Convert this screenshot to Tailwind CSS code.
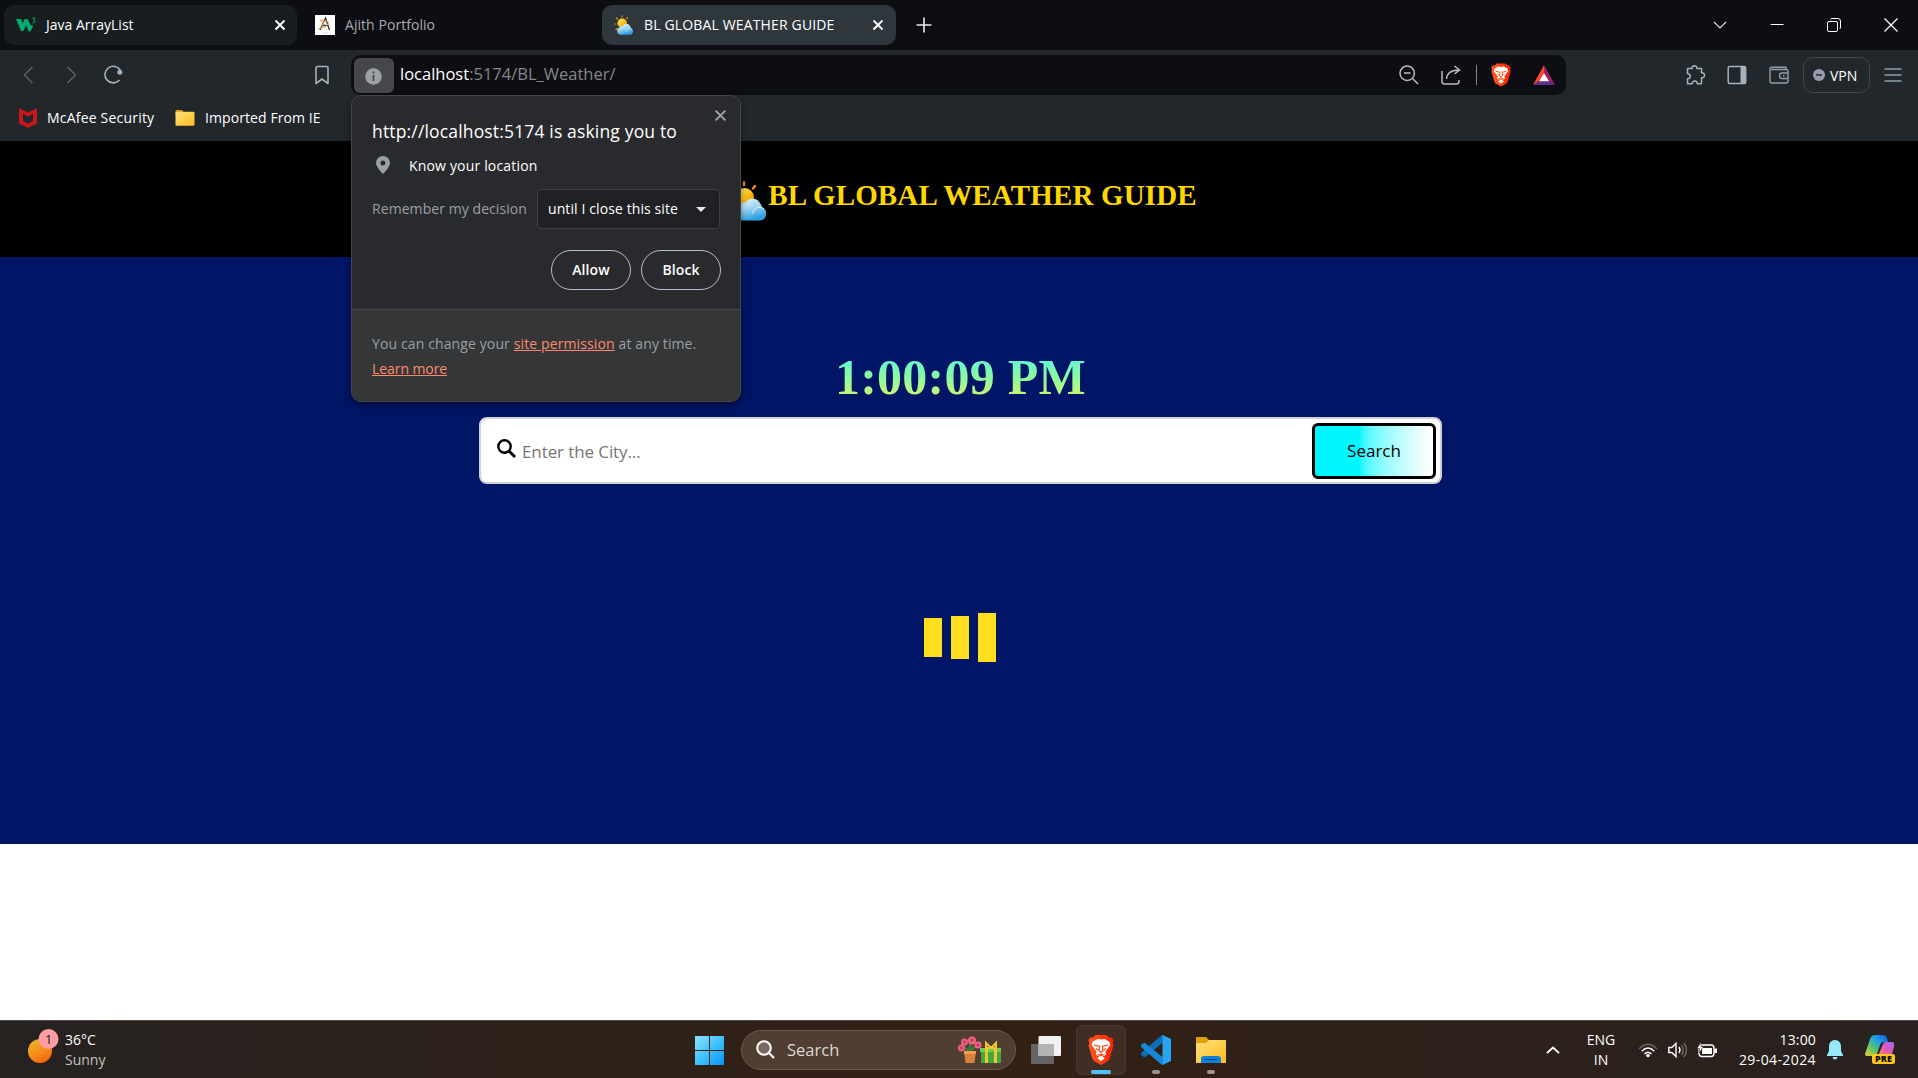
<!DOCTYPE html>
<html lang="en">
<head>
<meta charset="utf-8">
<title>BL GLOBAL WEATHER GUIDE</title>
<script src="https://cdn.jsdelivr.net/npm/@tailwindcss/browser@4"></script>
</head>
<body class="w-[1918px] h-[1078px] overflow-hidden bg-white font-['Open_Sans','Noto_Sans',sans-serif] text-[14px] text-white flex flex-col relative">
<!-- Shared gradients and symbols -->
<svg class="absolute w-0 h-0">
  <defs>
    <linearGradient id="sun" x1="0" y1="0" x2="1" y2="1"><stop offset="0" stop-color="#fff27a"/><stop offset=".5" stop-color="#fcc21b"/><stop offset="1" stop-color="#f57c00"/></linearGradient>
    <linearGradient id="sunny" x1=".2" y1="0" x2=".7" y2="1"><stop offset="0" stop-color="#ecb52c"/><stop offset=".5" stop-color="#f7901c"/><stop offset="1" stop-color="#f2640a"/></linearGradient>
    <linearGradient id="cloud" x1="0" y1="0" x2=".4" y2="1"><stop offset="0" stop-color="#e8f8ff"/><stop offset=".5" stop-color="#a5daf3"/><stop offset="1" stop-color="#2f9fe0"/></linearGradient>
    <linearGradient id="lion" x1="0" y1="0" x2="1" y2="0"><stop offset="0" stop-color="#ff5a1f"/><stop offset="1" stop-color="#ff2000"/></linearGradient>
    <linearGradient id="win" x1="0" y1="0" x2="1" y2="1"><stop offset="0" stop-color="#8fe3ff"/><stop offset=".5" stop-color="#3ec3ff"/><stop offset="1" stop-color="#0a90f5"/></linearGradient>
    <linearGradient id="fold" x1="0" y1="0" x2="1" y2="1"><stop offset="0" stop-color="#ffe07a"/><stop offset="1" stop-color="#fbbd20"/></linearGradient>
    <linearGradient id="cop1" x1="0" y1="1" x2="1" y2="0"><stop offset="0" stop-color="#f5d02a"/><stop offset=".35" stop-color="#58c66a"/><stop offset=".65" stop-color="#1f9fe8"/><stop offset="1" stop-color="#1552d8"/></linearGradient>
    <linearGradient id="cop2" x1="0" y1="1" x2="1" y2="0"><stop offset="0" stop-color="#ff8a4c"/><stop offset=".5" stop-color="#e056b8"/><stop offset="1" stop-color="#9a6cf5"/></linearGradient>
    <symbol id="weather" viewBox="0 0 40 40">
      <g stroke="#f08a1c" stroke-width="2.400" stroke-linecap="round"><path d="M16 1.500v2.500M27 5l-2 2.600M5 6l2.400 2.400M1.500 18h2.500M4 29l2-2"/></g>
      <circle cx="16.500" cy="16.500" r="9.500" fill="url(#sun)"/>
      <path d="M12.500 39.500a7.500 7.500 0 0 1-1-14.500 5.500 5.500 0 0 1 6-3.500 8.500 8.500 0 0 1 15 1.500 6 6 0 0 1 1.500 3.500 6.800 6.800 0 0 1-1.500 13z" fill="url(#cloud)"/>
      <path d="M25 33a6.500 6.500 0 0 1 11-5" fill="none" stroke="#e3f6ff" stroke-width="1.300" opacity=".7"/>
    </symbol>
    <symbol id="brave" viewBox="0 0 26 30">
      <path d="M7.500 0h11l2.600 2.700 2.300-.4 2.200 3-.9 2.700.8 2.500-3.800 13q-.5 1.800-2 2.800L13 30l-6.700-3.700q-1.500-1-2-2.800L.5 10.500 1.300 8 .4 5.300l2.200-3 2.300.4z" fill="url(#lion)"/>
      <path fill="#fff" d="M13 4.600 9.500 4 4.800 6.500 3.600 10l5 6.500-.6 3.200 3.500 1.800L9.300 23.300 13 26.300l3.700-3-2.200-1.800 3.500-1.800-.6-3.200 5-6.500-1.200-3.500L16.500 4z"/>
      <path d="M6 10l4.800 1.200M20 10l-4.800 1.200M11.700 10.500l-.7 5.500 2 1.300 2-1.300-.7-5.500M8.200 13.500l2 1.500M17.800 13.500l-2 1.500M13 17v3.600l-3.500-1.200M13 20.600l3.500-1.200" fill="none" stroke="#ff4310" stroke-width="1.200"/>
    </symbol>
    <symbol id="x" viewBox="0 0 12 12"><path d="M1.500 1.500l9 9M10.500 1.500l-9 9" stroke="currentColor" stroke-width="1.900" fill="none"/></symbol>
  </defs>
</svg>

<!-- Tab strip -->
<div class="h-[50px] bg-[#0d0e13] flex items-center pl-1 shrink-0">
  <div class="w-[293px] h-10 rounded-[10px] bg-[#181d20] flex items-center pl-3">
    <svg class="w-5 h-4 text-[#04aa6d]" viewBox="0 0 20 16"><path d="M0 2h5l1.800 4.500L8.500 2h3l3.700 7 .8-1.500 1 2-2.700 5h-1.500L10 8.500 7.500 14H5z" fill="currentColor"/><path d="M16.500 1h2.500l-1.500 2q1.800.2 1.500 1.700t-2.700 1" stroke="currentColor" fill="none"/></svg>
    <span class="ml-[10px] pb-[2px] w-[229px] whitespace-nowrap">Java ArrayList</span>
    <svg class="w-3 h-3 -ml-[1px]"><use href="#x"/></svg>
  </div>
  <div class="w-[305px] flex items-center pl-[18px] text-[#a9abaf]">
    <svg class="w-5 h-5" viewBox="0 0 20 20"><path d="M0 0h20v20H0z" fill="#fff"/><path d="M5 15l5.500-12 4 12M6.500 10.500h7" stroke="#333" stroke-width="1.300" fill="none"/><path d="M3 14q4 0 5-5t-2-4 3 1 4 3-6 4" stroke="#e0a24a" fill="none"/><path d="M7 18h6" stroke="#ccc" stroke-width=".7"/></svg>
    <span class="ml-[10px] pb-[2px] tracking-[.05px] whitespace-nowrap">Ajith Portfolio</span>
  </div>
  <div class="w-[294px] h-10 rounded-[10px] bg-[#2f373d] flex items-center pl-3">
    <svg class="w-5 h-5"><use href="#weather"/></svg>
    <span class="ml-[10px] pb-[2px] w-[228px] tracking-[.15px] whitespace-nowrap">BL GLOBAL WEATHER GUIDE</span>
    <svg class="w-3 h-3"><use href="#x"/></svg>
  </div>
  <svg class="w-4 h-4 ml-5" viewBox="0 0 16 16"><path d="M8 .5v15M.5 8h15" stroke="#eee" stroke-width="1.600"/></svg>
  <div class="ml-auto flex items-center gap-[43px] pr-5">
    <svg class="w-[14px] h-[14px]" viewBox="0 0 14 14"><path d="M1 4l6 6 6-6" stroke="#ddd" stroke-width="1.200" fill="none"/></svg>
    <svg class="w-[14px] h-[14px]" viewBox="0 0 14 14"><path d="M.5 6.500h13" stroke="#fff"/></svg>
    <svg class="w-[14px] h-[14px]" viewBox="0 0 14 14"><path d="M3.500 1.500Q4 .5 5 .5h6q2.500 0 2.500 2.500v6q0 1.500-1 2" stroke="#fff" fill="none"/><rect x=".5" y="3.500" width="10" height="10" rx="1.500" stroke="#fff" fill="none"/></svg>
    <svg class="w-[14px] h-[14px]" viewBox="0 0 14 14"><path d="M.5.5l13 13M13.500.5l-13 13" stroke="#fff" stroke-width="1.200"/></svg>
  </div>
</div>

<!-- Toolbar -->
<div class="h-[50px] bg-[#22272b] flex items-center pl-[23px] shrink-0">
  <svg class="w-3 h-5" viewBox="0 0 12 20"><path d="M9.500 2L1.500 10l8 8" stroke="#5b6266" stroke-width="1.500" fill="none"/></svg>
  <svg class="w-3 h-5 ml-[30px]" viewBox="0 0 12 20"><path d="M2.500 2l8 8-8 8" stroke="#5b6266" stroke-width="1.500" fill="none"/></svg>
  <svg class="w-5 h-5 ml-[26px]" viewBox="0 0 20 20"><path d="M17.500 5.500A8.300 8.300 0 1 0 16.500 15" stroke="#a3b2bb" stroke-width="1.600" fill="none"/><circle cx="16.800" cy="7.200" r="2.500" fill="#a3b2bb"/></svg>
  <svg class="w-4 h-5 ml-[191px]" viewBox="0 0 16 20"><path d="M2 18.500V3q0-1.500 1.500-1.500h9Q14 1.500 14 3v15.500l-6-4.500z" stroke="#a3b2bb" stroke-width="1.600" fill="none" stroke-linejoin="round"/></svg>
  <div class="ml-[21px] w-[1215px] h-10 rounded-[10px] bg-[#0d0e13] flex items-center pl-[3px] text-[16.500px]">
    <span class="w-10 h-[35px] rounded-md bg-[#46474b] flex items-center justify-center"><svg class="w-[17px] h-[17px] mt-[2px] mr-px" viewBox="0 0 17 17"><circle cx="8.500" cy="8.500" r="8.300" fill="#9aa0a6"/><path d="M8.500 3.500v2M8.500 7v6" stroke="#46474b" stroke-width="1.800"/></svg></span>
    <span class="ml-[6px] pb-px whitespace-nowrap">localhost</span><span class="pb-px text-[#85878b] whitespace-nowrap">:5174/BL_Weather/</span>
    <div class="ml-auto flex items-center pr-[11px]">
      <svg class="w-5 h-5 mr-[22px]" viewBox="0 0 20 20"><path d="M13.800 13.800L19 19M5 8h6.500" stroke="#b9babd" stroke-width="1.500"/><circle cx="8.200" cy="8.200" r="7.200" stroke="#b9babd" stroke-width="1.500" fill="none"/></svg>
      <svg class="w-5 h-5 mr-[15px]" viewBox="0 0 20 20"><path d="M1 6v10.500q0 2.500 2.500 2.500h12q2.500 0 2.500-2.500V15M5.500 14q.500-8.500 12-9M13.500 1l5 4-5 4" stroke="#b9babd" stroke-width="1.500" fill="none"/></svg>
      <span class="w-px h-5 bg-[#85878b] mr-[14px]"></span>
      <svg class="w-5 h-6 mr-[22px]"><use href="#brave"/></svg>
      <svg class="w-[22px] h-5" viewBox="0 0 22 20"><path d="M11 0v9l-5 7L0 20z" fill="#ff4724"/><path d="M11 0l11 20-6.500-4L11 9z" fill="#9e1f63"/><path d="M0 20l6.500-4h9l6.500 4z" fill="#662d91"/><path d="M11 8.300l5 8H6z" fill="#fff"/></svg>
    </div>
  </div>
  <div class="ml-auto flex items-center pr-4">
    <svg class="w-5 h-5 mr-[21px]" viewBox="0 0 20 20"><path d="M1.500 3.500h4.700q-.5-2.500 2.300-2.800Q11.300 1 10.800 3.500h4.700v4.300q3-.2 3 2.500t-3 2.500v6h-4.200q0-2.800-2.500-2.800t-2.600 2.800H1.500v-5q2.800 0 2.800-2.300T1.500 8.500z" stroke="#a3b2bb" stroke-width="1.500" fill="none" stroke-linejoin="round"/></svg>
    <svg class="w-5 h-5 mr-[22px]" viewBox="0 0 20 20"><rect x="1.200" y="1.500" width="17.500" height="17" rx="1.500" stroke="#a3b2bb" stroke-width="1.500" fill="none"/><path d="M13.500 1.500h5v17h-5z" fill="#a3b2bb"/></svg>
    <svg class="w-5 h-5 mr-[14px]" viewBox="0 0 20 20"><path d="M17 4.500V2.200H3Q1 2.200 1 3.500V16q0 2 2 2h14q2 0 2-2V6.500q0-2-2-2H2M19 8h-6q-2.500 0-2.500 2.800T13 13.500h6M14 10.800h1.500" stroke="#8fa0a8" stroke-width="1.400" fill="none"/></svg>
    <span class="w-[67px] h-[36px] rounded-[10px] border border-[#3d474c] flex items-center pl-[9px]"><svg class="w-3 h-3" viewBox="0 0 12 12"><circle cx="6" cy="6" r="6" fill="#9a9ab0"/><path d="M3 6h6" stroke="#22272b" stroke-width="1.500"/></svg><span class="ml-[5px] whitespace-nowrap">VPN</span></span>
    <svg class="w-[18px] h-4 ml-[14px]" viewBox="0 0 18 16"><path d="M.5 2h17M.5 8h17M.5 14h17" stroke="#8fa0a8" stroke-width="1.500"/></svg>
  </div>
</div>

<!-- Bookmarks bar -->
<div class="h-[41px] bg-[#22272b] flex items-center pl-[19px] pb-[6px] shrink-0">
  <svg class="w-[18px] h-5" viewBox="0 0 18 20"><path d="M0 0l9 4.500L18 0v15.500L9 20l-9-4.500zM4 6v7l5 2.500 5-2.500V6L9 8.500z" fill="#c8161d" fill-rule="evenodd"/></svg>
  <span class="ml-[10px] w-[128px] tracking-[.2px] whitespace-nowrap">McAfee Security</span>
  <svg class="w-5 h-4" viewBox="0 0 20 16"><path d="M1 0h6l2 2.500V5H.5V1z" fill="#d99a0b"/><rect x=".5" y="1.800" width="19" height="14" rx="1.200" fill="url(#fold)"/></svg>
  <span class="ml-[10px] tracking-[.09px] whitespace-nowrap">Imported From IE</span>
</div>

<!-- Page header -->
<header class="h-[116px] bg-black flex justify-center items-start pt-[38px] shrink-0 font-['Liberation_Serif',serif] font-bold">
  <svg class="w-10 h-10 ml-[7px] mt-[2px]"><use href="#weather"/></svg>
  <h1 class="text-[29px] leading-[33px] tracking-[.15px] text-[#ffd700] whitespace-nowrap">BL GLOBAL WEATHER GUIDE</h1>
</header>

<!-- Page body -->
<main class="h-[587px] bg-[#001565] flex flex-col items-center shrink-0">
  <div class="mt-[91px] h-[58px] leading-[58px] text-[50px] tracking-[.25px] font-bold font-['Liberation_Serif',serif] pl-[3px] bg-linear-to-b from-[#3df5f0] from-0% via-[#8cf8a0] via-50% to-[#dcf848] to-100% bg-clip-text text-transparent whitespace-nowrap">1:00:09 PM</div>
  <div class="mt-[11px] w-[963px] h-[67px] rounded-lg border-2 border-[#d2d2d6] bg-white flex items-center pl-4 pr-1 mr-[-3px] text-[17px]">
    <svg class="w-[19px] h-[19px] -mt-[5px]" viewBox="0 0 19 19"><circle cx="7.500" cy="7.500" r="6.200" stroke="#000" stroke-width="2.400" fill="none"/><path d="M12 12l6 6" stroke="#000" stroke-width="2.800"/></svg>
    <span class="ml-[6px] pt-[2px] tracking-[-.1px] text-[#757575] whitespace-nowrap">Enter the City...</span>
    <button class="ml-auto w-[124px] h-[56px] rounded-md border-[3px] border-black bg-linear-to-r from-[#00f7ff] from-38% to-white to-98% text-black">Search</button>
  </div>
  <div class="mt-[129px] flex items-center gap-[9px] ml-[2px]">
    <div class="w-[18px] h-[39px] bg-[#ffdd1f]"></div>
    <div class="w-[18px] h-[43px] bg-[#ffdd1f]"></div>
    <div class="w-[18px] h-[49px] bg-[#ffdd1f]"></div>
  </div>
</main>

<!-- Taskbar -->
<footer class="mt-auto h-[58px] shrink-0 border-t border-[#4a4643] bg-linear-to-r from-[#262220] via-[#332014] to-[#28211f] flex items-center text-[14px]">
  <div class="w-[695px] flex items-center pl-7">
    <svg class="w-8 h-9 -mt-[7px]" viewBox="0 0 32 36"><circle cx="12" cy="23" r="12" fill="url(#sunny)"/><circle cx="20.500" cy="11" r="10" fill="#ff9da4"/><text x="20.500" y="16" font-size="13.500" text-anchor="middle" fill="#222">1</text></svg>
    <div class="ml-[5px] leading-5 whitespace-nowrap"><div>36°C</div><div class="text-[#c5c3c1]">Sunny</div></div>
  </div>
  <svg class="w-[29px] h-[29px] mt-px" viewBox="0 0 29 29"><path d="M0 0h14v14H0zM15 0h14v14H15zM0 15h14v14H0zM15 15h14v14H15z" fill="url(#win)"/></svg>
  <div class="ml-[17px] w-[275px] h-10 rounded-full bg-[#513e33] border border-[#6b594e] flex items-center pl-[14px] text-[16.500px] text-[#dcd8d5]">
    <svg class="w-[19px] h-[19px]" viewBox="0 0 19 19"><circle cx="8" cy="8" r="6.800" stroke="#fff" stroke-width="2" fill="#7a6a61"/><path d="M13 13l5 5" stroke="#fff" stroke-width="2.200"/></svg>
    <span class="ml-3 pt-px w-[171px] whitespace-nowrap">Search</span>
    <svg class="w-11 h-7" viewBox="0 0 44 28"><path d="M12 15V6M12 15L5 11M12 15l7-6" stroke="#3f7a3a" stroke-width="2.500"/><g fill="#f0607f"><circle cx="14" cy="4.500" r="4"/><circle cx="6.500" cy="6" r="3.500"/><circle cx="20" cy="9" r="3.500"/><circle cx="3.500" cy="12" r="3.500"/></g><g fill="#b83358"><circle cx="14" cy="4" r="1.500"/><circle cx="6.500" cy="6" r="1.200"/><circle cx="20" cy="9" r="1.200"/><circle cx="3.500" cy="12" r="1.300"/></g><path d="M6 15h12l-1.500 12H7.500z" fill="#d9803a"/><path d="M6 15h12v3H6z" fill="#eda055"/><path d="M23 12h20v15H23z" fill="#43a840"/><path d="M22 12h21v4H22z" fill="#6bcf55"/><path d="M27 12h3v15h-3zM36 12h3v15h-3z" fill="#f5c531"/><path d="M33 12l-5-5v5zM33 12l5-5v5z" stroke="#f5c531" stroke-width="2" fill="none"/></svg>
  </div>
  <svg class="w-[30px] h-7 ml-[15px]" viewBox="0 0 30 28"><rect y="8" width="23" height="20" rx="1" fill="#646464"/><rect x="7.500" width="22.500" height="20" rx="1" fill="#f2f2f2"/><path d="M7.500 8H23v12H7.500z" fill="#b5b3b2"/></svg>
  <div class="ml-[15px] w-[50px] h-[50px] rounded-md bg-[#402e25] border border-[#4c3a31] flex flex-col items-center pt-[9px]">
    <svg class="w-[26px] h-[30px] shrink-0"><use href="#brave"/></svg><span class="mt-[5px] w-5 h-1 shrink-0 rounded-full bg-[#4cc2ff]"></span>
  </div>
  <div class="ml-[15px] w-[30px] h-[50px] flex flex-col items-center pt-[10px]">
    <svg class="w-[30px] h-[30px] shrink-0" viewBox="0 0 30 30"><path d="M21.500 8L3.500 22.500 0 20q-.5-1 0-2L20 .8 22 0z" fill="#0a6fb8"/><path d="M21.500 22L3.500 7.500 0 10q-.5 1 0 2l20 17.200 2 .8z" fill="#1787d6"/><path d="M21.500 0L30 4v22l-8.500 4z" fill="#2aa5f2"/></svg><span class="mt-[5px] w-2 h-1 shrink-0 rounded-full bg-[#9c9390]"></span>
  </div>
  <div class="ml-[25px] w-[30px] h-[50px] flex flex-col items-center pt-[12px]">
    <svg class="w-[30px] h-[26px] shrink-0" viewBox="0 0 30 26"><path d="M0 1q0-1 1-1h9l3 3v5H0z" fill="#e0a008"/><path d="M0 6h10l3-3h17v23H0z" fill="url(#fold)"/><path d="M5 26v-4q0-3 3-3h14q3 0 3 3v4z" fill="#1082d8"/><path d="M8.500 22.500h13" stroke="#084a8a" stroke-width="1.200"/></svg><span class="mt-[7px] w-2 h-1 shrink-0 rounded-full bg-[#9c9390]"></span>
  </div>
  <div class="ml-auto pr-[23px] flex items-center">
    <svg class="w-[14px] h-2" viewBox="0 0 14 8"><path d="M1 7l6-5.500L13 7" stroke="#fff" stroke-width="1.800" fill="none"/></svg>
    <div class="ml-[21px] w-10 text-center leading-5"><div>ENG</div><div>IN</div></div>
    <svg class="w-5 h-4 ml-[17px]" viewBox="0 0 20 16"><g fill="none" stroke="#fff" stroke-width="1.500"><path d="M1 7q9-9.500 18 0" opacity=".3"/><path d="M3.700 9.200q6.300-6.500 12.600 0M6.500 12q3.500-3.500 7 0"/></g><circle cx="10" cy="13.500" r="1.700" fill="#fff"/></svg>
    <svg class="w-5 h-[18px] ml-[10px]" viewBox="0 0 20 18"><path d="M.8 6.500h3L8 2.500v13l-4.200-4h-3zM11 6q2 3 0 6" stroke="#fff" stroke-width="1.400" fill="none"/><path d="M13.500 4q3.500 5 0 10M16 2q5 7 0 14" stroke="#fff" stroke-width="1.300" fill="none" opacity=".35"/></svg>
    <svg class="w-5 h-4 ml-[9px] mr-px" viewBox="0 0 20 16"><rect x="2" y="3" width="15" height="11.500" rx="3" stroke="#fff" stroke-width="1.400" fill="none"/><path d="M5 6h10v6H5zM17.500 6.500H20v4.500h-2.500z" fill="#fff"/><path d="M4 0L0 6.500h2.500L2 11l4.500-6.500H4z" fill="#fff" stroke="#30211a" stroke-width=".6"/></svg>
    <div class="ml-5 w-[78px] flex flex-col items-end leading-5 whitespace-nowrap"><div class="tracking-[.15px]">13:00</div><div class="tracking-[.4px]">29-04-2024</div></div>
    <svg class="w-4 h-5 ml-[11px]" viewBox="0 0 16 20"><path d="M8 0q6 .5 6 6.500V11l2 4v1H0v-1l2-4V6.500Q2 .5 8 0zM5.500 17h5q-.5 2.500-2.500 2.500T5.500 17z" fill="#98e8fb"/></svg>
    <svg class="w-[30px] h-[29px] ml-[22px]" viewBox="0 0 30 29"><path d="M0 19L5 4q1.500-4 5-4h8q3 0 4 3l1 4h-4q-3 0-4 3l-3 9q-.5 2-3 2H3q-3 0-3-2z" fill="url(#cop1)"/><path d="M28 7h-7q-2.500 0-3.500 3L13 21h11q2.500 0 3.300-3L29 12q.8-4-1-5z" fill="url(#cop2)"/><rect x="7" y="19" width="23" height="10" rx="2.500" fill="#ffc61a"/><text x="18.500" y="27.200" font-size="9" font-weight="800" text-anchor="middle" fill="#111" textLength="17">PRE</text></svg>
  </div>
</footer>

<!-- Location permission dialog -->
<section class="absolute left-[351px] top-[95px] w-[390px] h-[307px] rounded-[10px] border border-[#434548] bg-[#292a2d] shadow-[0_3px_6px_rgba(0,0,0,.45)] overflow-hidden flex flex-col">
  <svg class="absolute right-[13px] top-[13px] w-[13px] h-[13px] text-[#9aa0a6]"><use href="#x"/></svg>
  <div class="h-[214px] shrink-0 px-5 border-b border-[#434548] flex flex-col">
    <h2 class="mt-[21px] h-7 leading-7 text-[17.500px] tracking-[.16px] whitespace-nowrap">http://localhost:5174 is asking you to</h2>
    <div class="mt-[10px] h-5 flex items-center"><svg class="w-[14px] h-[18px] ml-1" viewBox="0 0 14 18"><path d="M7 0a7 7 0 0 1 7 7q0 4-7 11Q0 11 0 7a7 7 0 0 1 7-7zm0 4.500a2.500 2.500 0 1 0 0 5 2.500 2.500 0 0 0 0-5z" fill="#9aa0a6"/></svg><span class="ml-[19px] tracking-[.17px] whitespace-nowrap">Know your location</span></div>
    <div class="mt-[14px] h-10 flex items-center justify-between"><span class="pb-[2px] tracking-[.07px] text-[#9aa0a6] whitespace-nowrap">Remember my decision</span><span class="w-[183px] h-10 rounded-[4px] border border-[#3c4043] bg-[#202124] flex items-center justify-between pl-[10px] pr-[13px] whitespace-nowrap"><span class="pb-[2px] tracking-[.1px]">until I close this site</span><svg class="w-[10px] h-[5px]" viewBox="0 0 10 5"><path d="M0 0h10L5 5z" fill="#e8eaed"/></svg></span></div>
    <div class="mt-[21px] flex justify-end gap-[10px] -mr-[1px] font-semibold"><span class="w-20 h-10 rounded-full border border-[#b9bbd0] flex items-center justify-center pb-[2px] tracking-[.1px]">Allow</span><span class="w-20 h-10 rounded-full border border-[#b9bbd0] flex items-center justify-center pb-[2px] tracking-[.1px]">Block</span></div>
  </div>
  <div class="flex-1 bg-[#353637] px-5 pt-[21px] leading-[25px] text-[#9aa0a6] whitespace-nowrap">
    <p class="tracking-[.12px]">You can change your <a class="text-[#ff8a70] underline">site permission</a> at any time.</p>
    <p class="text-[#ff8a70]"><a class="underline tracking-[-.07px]">Learn more</a></p>
  </div>
</section>
</body>
</html>
